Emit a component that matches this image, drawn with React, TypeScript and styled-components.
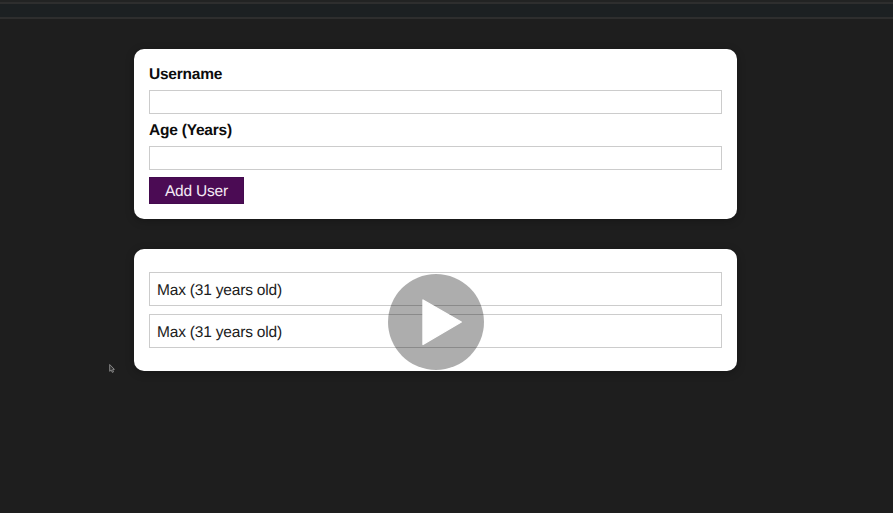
import React from 'react';
import styled, { createGlobalStyle } from 'styled-components';

const GlobalStyle = createGlobalStyle`
  * { box-sizing: border-box; }
  body {
    margin: 0;
    background: #1e1e1e;
    font-family: "Liberation Sans", Arial, sans-serif;
    text-rendering: geometricPrecision;
    overflow: hidden;
  }
`;

const Page = styled.div`
  position: relative;
  height: 513px;
  background: #1e1e1e;
`;

const TopBar = styled.header`
  height: 19px;
  border-top: 2px solid #222323;
  background: linear-gradient(#2e2e2e 0 2px, #1c2022 2px 15px, #2e2e2e 15px 17px, #1e1e1e 17px);
`;

const Content = styled.main`
  display: flex;
  flex-direction: column;
  gap: 30.5px;
  width: 603px;
  margin: 30.4px 0 0 134px;
`;

const Card = styled.section<{ $height: number; $top: number }>`
  display: flex;
  flex-direction: column;
  height: ${(p) => p.$height}px;
  padding: ${(p) => p.$top}px 15px 0;
  border-radius: 10px;
  background: #fff;
  box-shadow: 0 2px 8px rgba(0, 0, 0, 0.26);
`;

const Form = styled.form`
  display: flex;
  flex-direction: column;
  align-items: stretch;
`;

const Label = styled.label`
  height: 17px;
  margin-bottom: 8px;
  font-size: 15.5px;
  line-height: 19px;
  font-weight: 700;
  letter-spacing: -0.22px;
  color: #0c0c0c;
`;

const Input = styled.input`
  width: 100%;
  height: 24px;
  margin: 0 0 7.5px;
  padding: 2px;
  border: 1px solid #ccc;
  border-radius: 0;
  background: #fff;
  font: inherit;
  outline: none;
`;

const Button = styled.button`
  align-self: flex-start;
  width: 95px;
  height: 27px;
  margin-top: -0.8px;
  padding: 2px 0 0;
  border: 1px solid #430a4e;
  background: #4b0b54;
  color: #f4eaf5;
  font-family: inherit;
  font-size: 15.5px;
  line-height: 23px;
  letter-spacing: -0.2px;
  text-rendering: inherit;
`;

const List = styled.ul`
  display: flex;
  flex-direction: column;
  gap: 7.5px;
  margin: 0;
  padding: 0;
  list-style: none;
`;

const Item = styled.li`
  height: 34.5px;
  padding: 1px 7px 0;
  border: 1px solid #ccc;
  color: #1c1c1c;
  font-size: 15.5px;
  line-height: 33px;
  letter-spacing: -0.19px;
`;

const PlayButton = styled.div`
  position: absolute;
  left: 388px;
  top: 274px;
  width: 96px;
  height: 96px;
  border-radius: 50%;
  background: rgba(0, 0, 0, 0.32);
  svg { display: block; }
`;

const Pointer = styled.svg`
  position: absolute;
  left: 108px;
  top: 363px;
`;

const users = [
  { id: 1, name: 'Max', age: 31 },
  { id: 2, name: 'Max', age: 31 },
];

export default function App() {
  return (
    <Page>
      <GlobalStyle />
      <TopBar />
      <Content>
        <Card $height={169.6} $top={15.6}>
          <Form onSubmit={(e) => e.preventDefault()}>
            <Label htmlFor="username">Username</Label>
            <Input id="username" type="text" />
            <Label htmlFor="age">Age (Years)</Label>
            <Input id="age" type="text" />
            <Button type="submit">Add User</Button>
          </Form>
        </Card>
        <Card $height={121.5} $top={22.5}>
          <List>
            {users.map((u) => (
              <Item key={u.id}>{`${u.name} (${u.age} years old)`}</Item>
            ))}
          </List>
        </Card>
      </Content>
      <PlayButton role="button" aria-label="Play">
        <svg width="96" height="96" viewBox="0 0 96 96">
          <path
            d="M35 26 L73.3 48 L35 70.5 Z"
            fill="#fff"
            stroke="#fff"
            strokeWidth="1.4"
            strokeLinejoin="round"
          />
        </svg>
      </PlayButton>
      <Pointer width="8" height="11" viewBox="0 0 8 11">
        <path
          d="M1.7 1.5 L1.7 8.3 L3.2 7.1 L4.3 9.4 L5.5 8.9 L4.6 6.7 L6.4 6.4 Z"
          fill="#333"
          stroke="#909090"
          strokeWidth="0.9"
          strokeLinejoin="round"
        />
      </Pointer>
    </Page>
  );
}
